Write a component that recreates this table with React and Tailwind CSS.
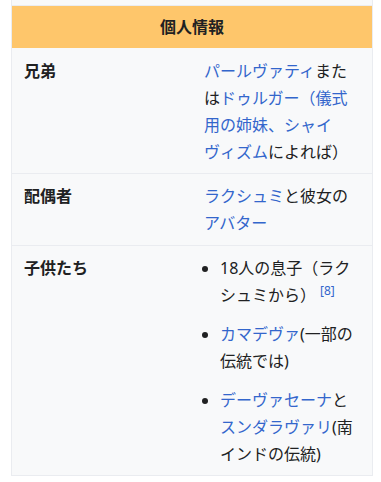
export default function App() {
  const link = 'text-[#3366cc]';

  return (
    <div
      lang="ja"
      className="w-[381px] h-[482px] bg-white overflow-hidden text-[16px] text-[#202122]"
      style={{ fontFamily: '"Noto Sans", "Noto Sans CJK JP", sans-serif' }}
    >
      <div className="ml-[11px] w-[362px] border-x border-b border-[#eaecf0] bg-[#f8f9fa]">
        <div className="h-[6px] border-b border-[#eaecf0]" />
        <div className="h-[42px] bg-[#fec66b] flex items-center justify-center font-bold">
          個人情報
        </div>

        <div className="flex border-b border-[#eaecf0] pt-[10px] pb-[7px] leading-[27px]">
          <div className="w-[192px] pl-[12px] font-bold">兄弟</div>
          <div className="w-[156px] [line-break:strict]">
            <a className={link}>パールヴァティ</a>または<a className={link}>ドゥルガー（儀式用の姉妹、シャイヴィズム</a>によれば）
          </div>
        </div>

        <div className="flex border-b border-[#eaecf0] pt-[9px] pb-[8px] leading-[27px]">
          <div className="w-[192px] pl-[12px] font-bold">配偶者</div>
          <div className="w-[156px]">
            <a className={link}>ラクシュミ</a>と彼女の<a className={link}>アバター</a>
          </div>
        </div>

        <div className="flex pt-[9px] pb-[7px] leading-[27px]">
          <div className="w-[192px] pl-[12px] font-bold">子供たち</div>
          <ul className="w-[156px] list-disc pl-[16px]">
            <li>
              18人の息子（ラクシュミから）
              <sup className={`${link} text-[12px] ml-[4px]`}>[8]</sup>
            </li>
            <li className="mt-[12px]">
              <a className={link}>カマデヴァ</a>(一部の伝統では)
            </li>
            <li className="mt-[12px]">
              <a className={link}>デーヴァセーナ</a>と<a className={link}>スンダラヴァリ</a>(南インドの伝統)
            </li>
          </ul>
        </div>
      </div>
    </div>
  );
}
